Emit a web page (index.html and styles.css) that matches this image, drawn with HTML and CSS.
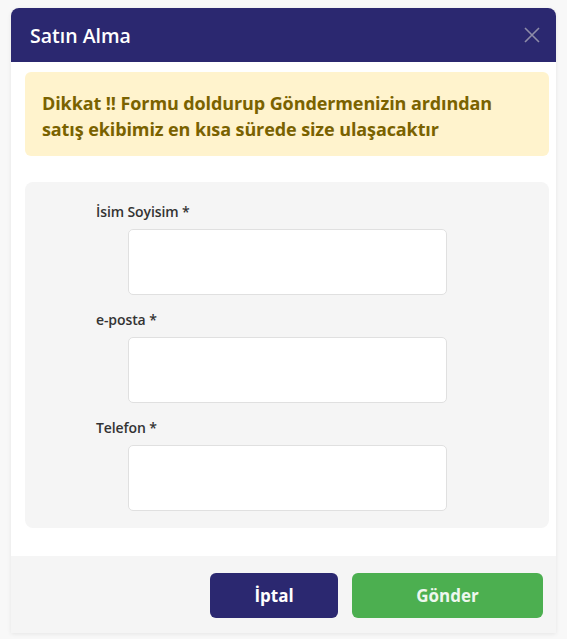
FILE: index.html
```html
<!DOCTYPE html>
<html lang="tr">
<head>
  <meta charset="UTF-8" />
  <title>Satın Alma</title>
  <link rel="stylesheet" href="styles.css">
</head>
<body>
  <div class="modal">
    <div class="modal-header">
      <div class="modal-title">Satın Alma</div>
      <button class="close-btn" aria-label="Kapat">
        <svg width="16" height="16" viewBox="0 0 16 16">
          <path d="M1 1 L15 15 M15 1 L1 15" stroke="#8d8ca8" stroke-width="1.6" fill="none" />
        </svg>
      </button>
    </div>
    <div class="modal-body">
      <div class="alert">Dikkat !! Formu doldurup Göndermenizin ardından satış ekibimiz en kısa sürede size ulaşacaktır</div>
      <form class="form-panel">
        <div class="field">
          <label for="name">İsim Soyisim *</label>
          <input type="text" id="name" />
        </div>
        <div class="field">
          <label for="email">e-posta *</label>
          <input type="email" id="email" />
        </div>
        <div class="field">
          <label for="phone">Telefon *</label>
          <input type="tel" id="phone" />
        </div>
      </form>
    </div>
    <div class="modal-footer">
      <button class="btn btn-cancel">İptal</button>
      <button class="btn btn-send">Gönder</button>
    </div>
  </div>
</body>
</html>
```

FILE: styles.css
```css
:root {
  --navy: #2b2870;
  --green: #4caf50;
  --panel: #f5f5f5;
  --radius: 6px;
}
body {
  font-family: "Open Sans", "Noto Sans", sans-serif;
  margin: 0;
  padding: 8px 11px;
  background: #f8f8f8;
  color: #222;
}
.modal {
  width: 545px;
  background: #fff;
  border-radius: 8px 8px 0 0;
  overflow: hidden;
  box-shadow: 0 1px 4px rgba(0,0,0,0.08);
}
.modal-header {
  display: flex;
  justify-content: space-between;
  align-items: center;
  height: 54px;
  padding: 0 16px 0 19px;
  background: var(--navy);
}
.modal-title {
  color: #fff;
  font-size: 19.5px;
  font-weight: 600;
}
.close-btn {
  background: none;
  border: none;
  padding: 0;
  display: flex;
  cursor: pointer;
}
.modal-body {
  padding: 10px 7px 28px 14px;
}
.alert {
  background: #fff3cd;
  color: #7a6200;
  font-size: 18px;
  font-weight: 700;
  line-height: 26px;
  padding: 18px 30px 14px 17px;
  border-radius: var(--radius);
  letter-spacing: -0.1px;
}
.form-panel {
  margin-top: 26px;
  background: var(--panel);
  border-radius: 8px;
  padding: 20px 0 17px 0;
  display: flex;
  flex-direction: column;
  gap: 15px;
}
.field {
  display: flex;
  flex-direction: column;
  padding-left: 71px;
}
.field label {
  font-size: 14px;
  font-weight: 600;
  color: #333;
  line-height: 20px;
  margin-bottom: 7px;
  letter-spacing: -0.1px;
}
.field input {
  margin-left: 32px;
  width: 319px;
  height: 66px;
  box-sizing: border-box;
  border: 1px solid #e0e0e0;
  border-radius: 5px;
  background: #fff;
  font-family: inherit;
  font-size: 15px;
  padding: 0 10px;
  outline: none;
}
.modal-footer {
  display: flex;
  justify-content: flex-end;
  gap: 14px;
  height: 77px;
  padding: 17px 13px 0 0;
  box-sizing: border-box;
  background: var(--panel);
}
.btn {
  height: 45px;
  border: none;
  border-radius: var(--radius);
  color: #fff;
  font-family: inherit;
  font-size: 17px;
  font-weight: 700;
  cursor: pointer;
}
.btn-cancel {
  width: 128px;
  background: var(--navy);
}
.btn-send {
  width: 191px;
  background: var(--green);
  color: #eef7ee;
}
```
